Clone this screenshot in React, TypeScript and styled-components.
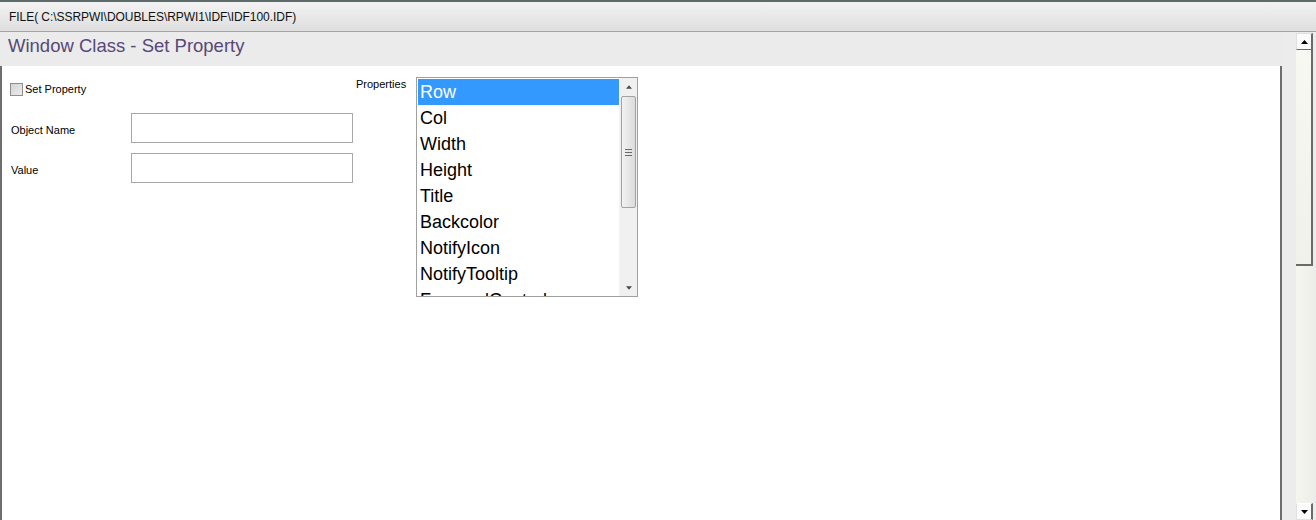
import styled, { createGlobalStyle } from "styled-components";

const GlobalStyle = createGlobalStyle`
  html, body {
    margin: 0;
    padding: 0;
    overflow: hidden;
    background: #ececec;
    font-family: "Liberation Sans", Arial, sans-serif;
  }
`;

const Screen = styled.div`
  width: 1316px;
  height: 520px;
  display: flex;
  flex-direction: column;
  background: #ececec;
`;

const TitleBar = styled.div`
  height: 29px;
  border-top: 2px solid #5d6b6b;
  border-bottom: 1px solid #a4a4a4;
  background: linear-gradient(#f3f3f3, #dedede);
  display: flex;
  align-items: center;
  padding-left: 9px;
  font-size: 12px;
  line-height: 14px;
  letter-spacing: -0.05px;
  color: #111;
`;

const Main = styled.div`
  flex: 1;
  display: flex;
  min-height: 0;
`;

const Panel = styled.div`
  width: 1282px;
  display: flex;
  flex-direction: column;
`;

const Heading = styled.div`
  height: 34px;
  box-sizing: border-box;
  padding: 4px 0 0 8px;
  font-size: 18.5px;
  line-height: 20px;
  color: #574877;
  background: #ebebeb;
`;

const Sheet = styled.div`
  flex: 1;
  background: #fff;
  border-left: 2px solid #6e6e6e;
  border-right: 2px solid #6e6e6e;
  padding: 11px 8px 0;
  display: flex;
  align-items: flex-start;
`;

const FormColumn = styled.div`
  width: 343px;
  display: flex;
  flex-direction: column;
  gap: 10px;
`;

const CheckRow = styled.label`
  display: flex;
  align-items: center;
  height: 18px;
  margin: 3px 0 5px;
  font-size: 11px;
  color: #000;
`;

const CheckBox = styled.span`
  width: 11px;
  height: 11px;
  border: 1px solid #8e8f8f;
  background: linear-gradient(135deg, #d4d4d4, #ececec);
  margin-right: 2px;
`;

const FieldRow = styled.div`
  display: flex;
  align-items: center;
  height: 30px;
`;

const FieldLabel = styled.span`
  width: 120px;
  padding-left: 1px;
  padding-top: 4px;
  font-size: 11px;
  color: #000;
`;

const TextBox = styled.div`
  width: 220px;
  height: 28px;
  border: 1px solid #a8a8a8;
  background: #fff;
`;

const PropLabel = styled.span`
  width: 60px;
  margin: 1px 0 0 3px;
  font-size: 11px;
  line-height: 13px;
  color: #000;
`;

const ListBox = styled.div`
  width: 220px;
  height: 218px;
  border: 1px solid #a0a0a0;
  display: flex;
  background: #fff;
  overflow: hidden;
`;

const Items = styled.div`
  flex: 1;
  padding: 1px 0 0 1px;
  overflow: hidden;
`;

const Item = styled.div<{ $selected?: boolean }>`
  height: 26px;
  line-height: 26px;
  padding-left: 2px;
  font-size: 18px;
  white-space: nowrap;
  background: ${(p) => (p.$selected ? "#3399ff" : "transparent")};
  color: ${(p) => (p.$selected ? "#fff" : "#000")};
`;

const ListScroll = styled.div`
  width: 17px;
  background: #f0f0f0;
  display: flex;
  flex-direction: column;
  border-left: 1px solid #f4f4f4;
`;

const ArrowBtn = styled.div<{ $h: number }>`
  height: ${(p) => p.$h}px;
  display: flex;
  align-items: center;
  justify-content: center;
`;

const ListThumb = styled.div`
  height: 110px;
  margin: 0 1px;
  border: 1px solid #a2a2a2;
  border-radius: 2px;
  background: linear-gradient(90deg, #f2f2f2, #dcdcdc);
  display: flex;
  align-items: center;
  justify-content: center;
`;

const Track = styled.div`
  flex: 1;
`;

const Gutter = styled.div`
  flex: 1;
  display: flex;
  padding: 1px 3px 0 14px;
`;

const PageScroll = styled.div`
  width: 17px;
  display: flex;
  flex-direction: column;
  background: #f4f4ef;
`;

const PageBtn = styled.div<{ $down?: boolean }>`
  height: 15px;
  display: flex;
  align-items: center;
  justify-content: center;
  background: #fbfbfb;
  border: 1px solid #e0e0e0;
  border-top-color: ${(p) => (p.$down ? "#fff" : "#e0e0e0")};
  border-bottom: 1px solid ${(p) => (p.$down ? "#e0e0e0" : "#6a6a6a")};
  border-right: 2px solid #6a6a6a;
`;

const PageThumb = styled.div`
  height: 214px;
  background: linear-gradient(#f8f8f3, #f1f1ec);
  border-right: 2px solid #6a6a6a;
  border-bottom: 2px solid #6a6a6a;
`;

const PageTrack = styled.div`
  flex: 1;
  background: linear-gradient(90deg, #f6f6f1, #efefe9);
`;

const Tri = ({ down, color = "#000", w = 7 }: { down?: boolean; color?: string; w?: number }) => (
  <svg width={w} height={4} viewBox="0 0 7 4">
    <path d={down ? "M0 0 H7 L3.5 4 Z" : "M0 4 H7 L3.5 0 Z"} fill={color} />
  </svg>
);

const Grip = () => (
  <svg width={7} height={7} viewBox="0 0 7 7">
    <path d="M0 0.5 H7 M0 3.5 H7 M0 6.5 H7" stroke="#6a6a6a" strokeWidth={1} />
  </svg>
);

const props = [
  "Row",
  "Col",
  "Width",
  "Height",
  "Title",
  "Backcolor",
  "NotifyIcon",
  "NotifyTooltip",
  "FocusedControl",
];

export default function App() {
  return (
    <>
      <GlobalStyle />
      <Screen>
        <TitleBar>FILE( C:\SSRPWI\DOUBLES\RPWI1\IDF\IDF100.IDF)</TitleBar>
        <Main>
          <Panel>
            <Heading>Window Class - Set Property</Heading>
            <Sheet>
              <FormColumn>
                <CheckRow>
                  <CheckBox />
                  Set Property
                </CheckRow>
                <FieldRow>
                  <FieldLabel>Object Name</FieldLabel>
                  <TextBox />
                </FieldRow>
                <FieldRow>
                  <FieldLabel>Value</FieldLabel>
                  <TextBox />
                </FieldRow>
              </FormColumn>
              <PropLabel>Properties</PropLabel>
              <ListBox>
                <Items>
                  {props.map((p, i) => (
                    <Item key={p} $selected={i === 0}>
                      {p}
                    </Item>
                  ))}
                </Items>
                <ListScroll>
                  <ArrowBtn $h={18}>
                    <Tri color="#4a4a4a" w={6} />
                  </ArrowBtn>
                  <ListThumb>
                    <Grip />
                  </ListThumb>
                  <Track />
                  <ArrowBtn $h={17}>
                    <Tri down color="#4a4a4a" w={6} />
                  </ArrowBtn>
                </ListScroll>
              </ListBox>
            </Sheet>
          </Panel>
          <Gutter>
            <PageScroll>
              <PageBtn>
                <Tri />
              </PageBtn>
              <PageThumb />
              <PageTrack />
              <PageBtn $down>
                <Tri down />
              </PageBtn>
            </PageScroll>
          </Gutter>
        </Main>
      </Screen>
    </>
  );
}
